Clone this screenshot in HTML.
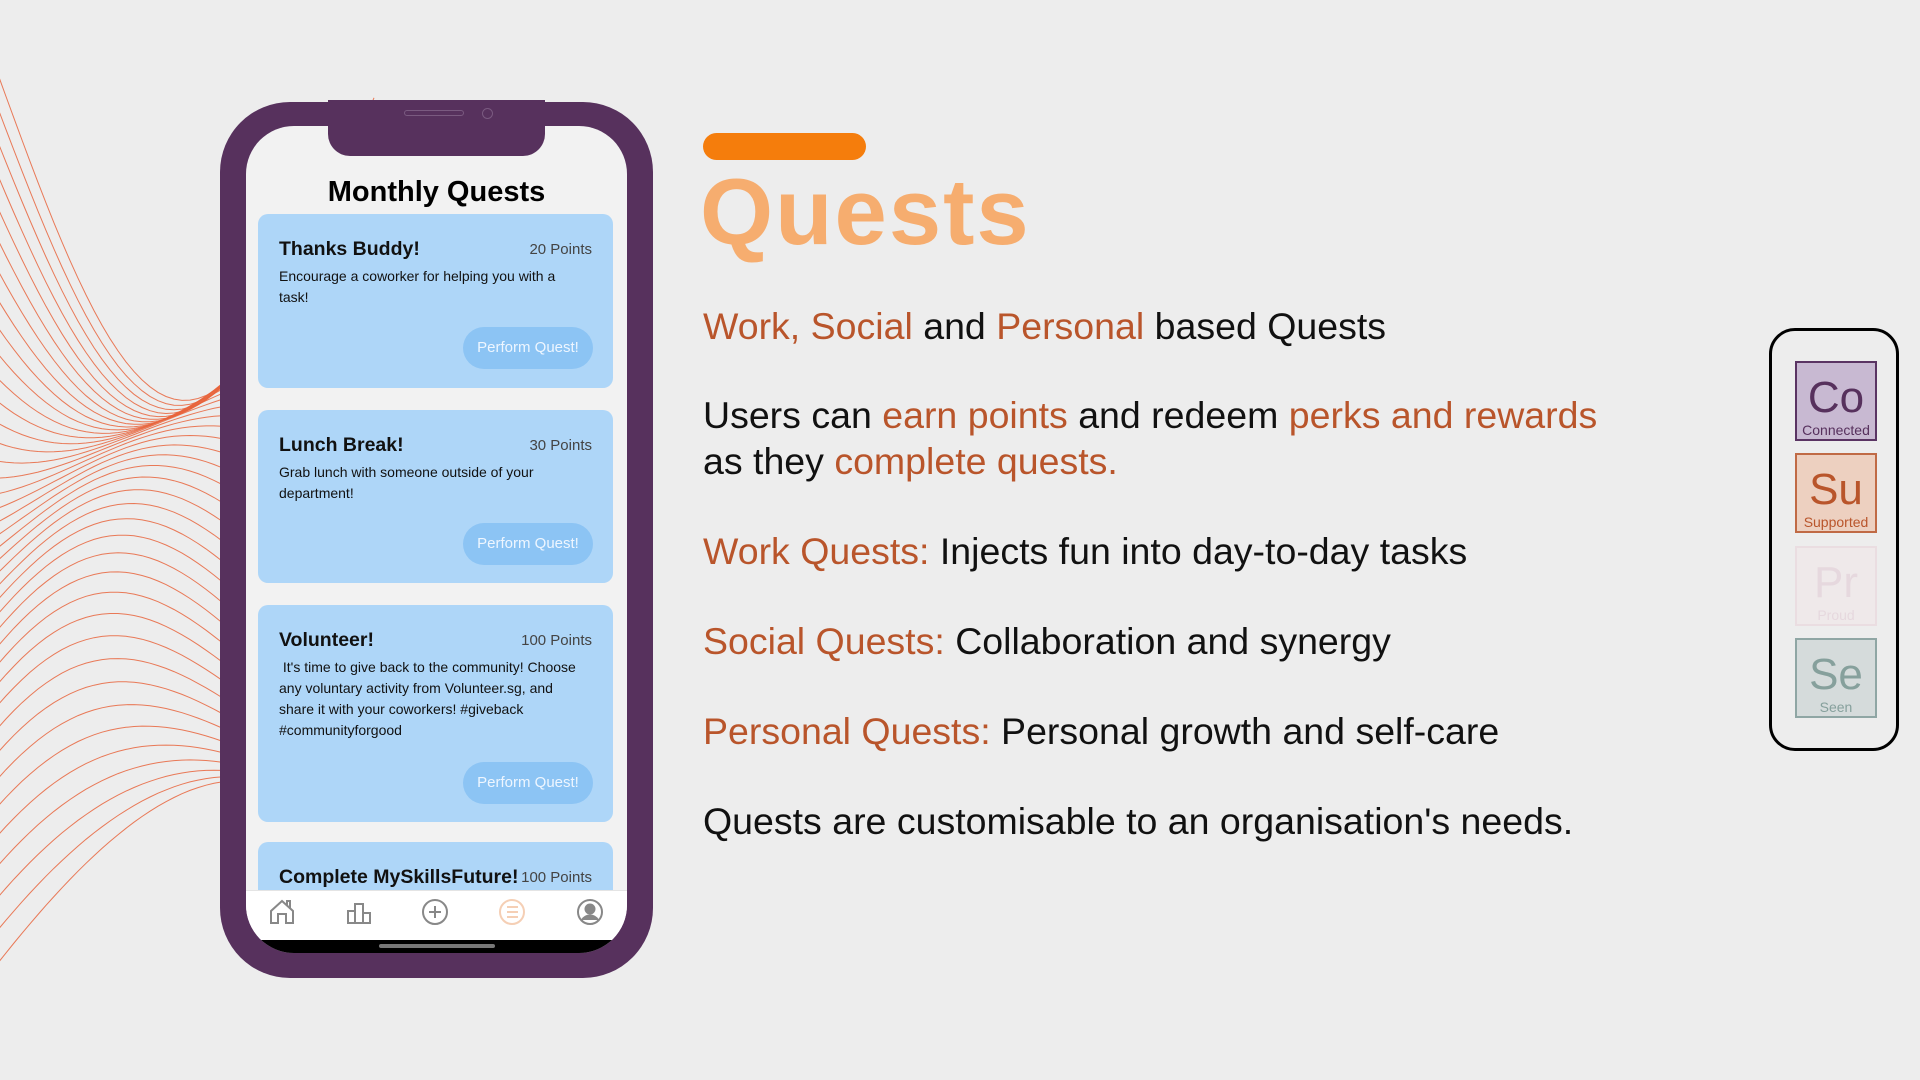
<!DOCTYPE html>
<html><head><meta charset="utf-8"><style>
*{margin:0;padding:0;box-sizing:border-box}
body{width:1920px;height:1080px;background:#ededed;position:relative;overflow:hidden;font-family:"Liberation Sans",sans-serif}
.abs{position:absolute}
#phone{left:220px;top:102px;width:433px;height:876px;background:#57315d;border-radius:70px}
#screen{left:246px;top:126px;width:381px;height:827px;background:#f2f2f2;border-radius:48px;overflow:hidden}
#notch{left:328px;top:100px;width:217px;height:56px;background:#57315d;border-radius:0 0 22px 22px}
.card{position:absolute;left:12px;width:355px;background:#aed6f8;border-radius:10px}
.card h3{position:absolute;left:21px;top:24px;font-size:19.5px;color:#111}
.card .pt{position:absolute;right:21px;top:27px;font-size:15px;color:#444}
.card p{position:absolute;left:21px;top:52px;width:300px;font-size:14px;line-height:21px;color:#111}
.card .btn{position:absolute;right:20px;width:130px;height:42px;border-radius:21px;background:#8cc4f4;color:#eef6ff;font-size:15px;text-align:center;line-height:42px}
.line{position:absolute;left:703px;font-size:37.5px;color:#111;white-space:nowrap}
.o{color:#b9552b}
.tile{position:absolute;left:23px;width:82px;height:80px;border:2px solid;text-align:center}
.tile b{display:block;font-weight:normal;font-size:44px;line-height:50px;margin-top:10px}
.tile i{display:block;font-style:normal;font-size:14px;line-height:14px}
</style></head><body>
<svg class="abs" style="left:0;top:0" width="420" height="1080" id="waves"></svg>
<div id="phone" class="abs"></div>
<div id="screen" class="abs">
 <div class="abs" style="left:0;top:50px;width:381px;text-align:center;font-size:29px;font-weight:bold;color:#000">Monthly Quests</div>
 <div class="card" style="top:88px;height:174px"><h3>Thanks Buddy!</h3><span class="pt">20 Points</span><p>Encourage a coworker for helping you with a task!</p><div class="btn" style="top:113px">Perform Quest!</div></div>
 <div class="card" style="top:284px;height:173px"><h3>Lunch Break!</h3><span class="pt">30 Points</span><p>Grab lunch with someone outside of your department!</p><div class="btn" style="top:113px">Perform Quest!</div></div>
 <div class="card" style="top:479px;height:217px"><h3>Volunteer!</h3><span class="pt">100 Points</span><p>&nbsp;It's time to give back to the community! Choose any voluntary activity from Volunteer.sg, and share it with your coworkers! #giveback #communityforgood</p><div class="btn" style="top:157px">Perform Quest!</div></div>
 <div class="card" style="top:716px;height:100px"><h3>Complete MySkillsFuture!</h3><span class="pt">100 Points</span></div>
 <div class="abs" style="left:0;top:764px;width:381px;height:50px;background:#fff;border-top:1px solid #e4e4e4">
  <svg width="381" height="50" fill="none" stroke="#888" stroke-width="2">
   <path d="M25 32V20l11-10 11 10v12h-7v-9h-8v9z M41 15v-5h3v8"/>
   <path d="M101 32h24 M102 32V20h7v12 M109 32V13h8v19 M117 32V22h7v10"/>
   <circle cx="189" cy="21" r="12"/><path d="M189 15v12M183 21h12"/>
   <circle cx="266" cy="21" r="12" stroke="#f5cfb5"/><path d="M261 16h11M261 21h11M261 26h11" stroke="#f5cfb5"/>
   <circle cx="344" cy="21" r="12"/><circle cx="344" cy="18" r="4.5" fill="#888"/><path d="M336 29c4-6 12-6 16 0" fill="#888"/>
  </svg>
 </div>
 <div class="abs" style="left:0;top:814px;width:381px;height:20px;background:#000"></div>
 <div class="abs" style="left:133px;top:818px;width:116px;height:4px;background:#777;border-radius:2px"></div>
</div>
<div id="notch" class="abs"><div class="abs" style="left:76px;top:10px;width:60px;height:6px;border:1px solid #7a5a80;border-radius:3px"></div><div class="abs" style="left:154px;top:8px;width:11px;height:11px;border:1px solid #7a5a80;border-radius:50%"></div></div>
<div class="abs" style="left:703px;top:133px;width:163px;height:27px;background:#f57d0c;border-radius:14px"></div>
<div class="abs" style="left:700px;top:158px;font-size:94px;font-weight:bold;color:#f6ad6f;letter-spacing:2px">Quests</div>
<div class="line" style="top:305px"><span class="o">Work, Social</span> and <span class="o">Personal</span> based Quests</div>
<div class="line" style="top:394px">Users can <span class="o">earn points</span> and redeem <span class="o">perks and rewards</span></div>
<div class="line" style="top:440px">as they <span class="o">complete quests.</span></div>
<div class="line" style="top:530px"><span class="o">Work Quests:</span> Injects fun into day-to-day tasks</div>
<div class="line" style="top:620px"><span class="o">Social Quests:</span> Collaboration and synergy</div>
<div class="line" style="top:710px"><span class="o">Personal Quests:</span> Personal growth and self-care</div>
<div class="line" style="top:800px">Quests are customisable to an organisation's needs.</div>
<div class="abs" style="left:1769px;top:328px;width:130px;height:423px;border:3px solid #000;border-radius:26px">
 <div class="tile" style="top:30px;background:#c8b9d2;border-color:#5a3463;color:#57315d"><b>Co</b><i>Connected</i></div>
 <div class="tile" style="top:122px;background:#edd0c0;border-color:#c06a45;color:#b9552b"><b>Su</b><i>Supported</i></div>
 <div class="tile" style="top:215px;background:#efe9ea;border-color:#eadde1;color:#e6d8de"><b>Pr</b><i>Proud</i></div>
 <div class="tile" style="top:307px;background:#d5dbdb;border-color:#8fa6a4;color:#86a09c"><b>Se</b><i>Seen</i></div>
</div>
<script>
var s=document.getElementById('waves'),h='';
for(var i=0;i<40;i++){
 var t=i/39,d='';
 for(var x=-10;x<=380;x+=8){
  var u=x/370;
  var y=80+t*900 + (1-2*t)*260*Math.sin(Math.PI*u*0.9) + 70*Math.sin(4*u+t*6);
  d+=(x==-10?'M':'L')+x+' '+y.toFixed(1);
 }
 h+='<path d="'+d+'" fill="none" stroke="#e8643c" stroke-width="1" opacity="0.85"/>';
}
s.innerHTML=h;
</script>
</body></html>
